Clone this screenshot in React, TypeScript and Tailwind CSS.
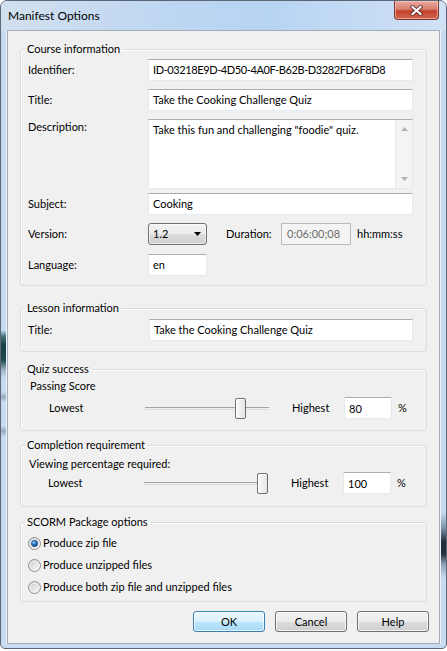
import React from "react";

function TextBox({
  value,
  className = "",
  disabled = false,
}: {
  value: string;
  className?: string;
  disabled?: boolean;
}) {
  return (
    <div
      className={`h-[22px] flex items-center border whitespace-nowrap ${
        disabled
          ? "bg-[#f4f4f4] border-[#b8bcc0] text-[#6d6d6d] pl-[5px]"
          : "bg-white border-[#e3e9ef] border-t-[#abadb3] text-black pl-[4px]"
      } ${className}`}
    >
      {value}
    </div>
  );
}

function Row({ label, children }: { label: string; children: React.ReactNode }) {
  return (
    <div className="flex items-center h-[22px]">
      <span className="w-[120px] shrink-0">{label}</span>
      {children}
    </div>
  );
}

function Group({
  title,
  className = "",
  children,
}: {
  title: string;
  className?: string;
  children: React.ReactNode;
}) {
  return (
    <fieldset
      className={`mx-[12px] min-w-0 border border-[#d5dfe5] rounded-[3px] px-[7px] shadow-[inset_1px_1px_0_#fff] ${className}`}
    >
      <legend className="-ml-[3px] px-[2px] leading-[16px]">{title}</legend>
      {children}
    </fieldset>
  );
}

function Slider({ value }: { value: number }) {
  // thumb travels over 113px of a 124px track
  const left = Math.round((value / 100) * 113);
  return (
    <div className="relative w-[124px] h-[22px] shrink-0">
      <div className="absolute left-0 right-0 top-[10px] h-[3px] border-t border-b border-t-[#a3a3a3] border-b-[#dcdcdc] bg-[#eef1f1]" />
      <div
        className="absolute top-[1px] w-[11px] h-[21px] rounded-[2px] border border-[#707070] bg-[linear-gradient(to_right,#fafafa,#e4e4e4)] shadow-[inset_1px_1px_0_#fff]"
        style={{ left }}
      />
    </div>
  );
}

function SliderRow({ value, shift = 0 }: { value: number; shift?: number }) {
  return (
    <div className={`flex items-center h-[22px] ${shift ? "-ml-[1px]" : ""}`}>
      <span className="ml-[21px] w-[96px] shrink-0">Lowest</span>
      <Slider value={value} />
      <span className="ml-[23px] w-[52px] shrink-0">Highest</span>
      <TextBox value={String(value)} className="w-[48px] items-start pt-[3px]" />
      <span className="ml-[6px]">%</span>
    </div>
  );
}

function Radio({ checked, label }: { checked?: boolean; label: string }) {
  return (
    <div className="flex items-center h-[22px]">
      <svg width="13" height="13" viewBox="0 0 13 13" className="shrink-0">
        <defs>
          <linearGradient id="rbFill" x1="0" y1="0" x2="1" y2="1">
            <stop offset="0" stopColor="#cdcdcd" />
            <stop offset="1" stopColor="#fafafa" />
          </linearGradient>
          <radialGradient id="rbDot" cx="0.4" cy="0.35" r="0.65">
            <stop offset="0" stopColor="#a8dcfa" />
            <stop offset="0.45" stopColor="#2d7cc6" />
            <stop offset="1" stopColor="#0d3a72" />
          </radialGradient>
        </defs>
        <circle cx="6.5" cy="6.5" r="6" fill="url(#rbFill)" stroke="#8e8f8f" />
        <circle cx="6.5" cy="6.5" r="4.5" fill="none" stroke="#f4f4f4" strokeWidth="0.8" />
        {checked && <circle cx="6.5" cy="6.5" r="3.2" fill="url(#rbDot)" stroke="#1b4f8a" strokeWidth="0.5" />}
      </svg>
      <span className="ml-[2px]">{label}</span>
    </div>
  );
}

function Button({ label, primary }: { label: string; primary?: boolean }) {
  return (
    <div
      className={`w-[72px] h-[21px] flex items-center justify-center rounded-[3px] border ${
        primary
          ? "border-[#3c7fb1] bg-[linear-gradient(#eaf6fd,#d9f0fc_50%,#bee6fd_51%,#a7d9f5)]"
          : "border-[#707070] bg-[linear-gradient(#f2f2f2,#ebebeb_50%,#dddddd_51%,#cfcfcf)]"
      } shadow-[inset_0_0_0_1px_rgba(255,255,255,0.7)]`}
    >
      {label}
    </div>
  );
}

export default function App() {
  return (
    <div className="w-[447px] h-[651px] bg-white [font-family:Lato,'Noto_Sans',sans-serif] text-[11px] leading-[16px] text-black">
      <div className="w-[447px] h-[649px] flex flex-col border border-[#5b6776] rounded-t-[7px] rounded-b-[5px] overflow-hidden bg-[#c8dcf1]">
        {/* Title bar */}
        <div className="h-[29px] flex items-start justify-between bg-[linear-gradient(90deg,#d2e0ef,#bcd6f2_40%,#b8d4f3_60%,#cfe1f5)]">
          <span className="self-center ml-[7px] text-[12px]">Manifest Options</span>
          <div className="mr-[7px] w-[45px] h-[19px] flex items-center justify-center rounded-b-[4px] border border-t-0 border-[#7e3a33] bg-[linear-gradient(#e9a99f,#d7806f_45%,#c4412e_55%,#d0674f)] shadow-[inset_0_0_0_1px_rgba(255,220,210,0.5)]">
            <svg width="13" height="11" viewBox="0 0 13 11">
              <path d="M2.5 2 L10.5 9 M10.5 2 L2.5 9" stroke="#5a2e2a" strokeWidth="4" strokeLinecap="square" opacity="0.8" />
              <path d="M2.5 2 L10.5 9 M10.5 2 L2.5 9" stroke="#ffffff" strokeWidth="2" strokeLinecap="square" />
            </svg>
          </div>
        </div>

        <div className="flex flex-1 min-h-0">
          <div className="w-[6px] shadow-[inset_-1px_0_0_#eaf3fc] bg-[linear-gradient(to_bottom,#c8dcf1_0px,#c8dcf1_300px,#4a7880_306px,#153f44_315px,#1d4a50_330px,#9fb5c5_340px,#c8dcf1_348px,#c8dcf1_362px,#98a8b8_367px,#c8dcf1_372px,#c8dcf1_396px,#98a8b8_401px,#c8dcf1_407px,#c8dcf1_100%)]" />

          {/* Client area */}
          <div className="w-[433px] border border-[#a2adb9] bg-[#f0f0f0] flex flex-col">
            <Group title="Course information" className="mt-[10px] pt-[2px] pb-[9px]">
              <div className="flex flex-col">
                <Row label="Identifier:">
                  <TextBox value="ID-03218E9D-4D50-4A0F-B62B-D3282FD6F8D8" className="w-[265px] tracking-[-0.4px]" />
                </Row>
                <div className="mt-[8px]">
                  <Row label="Title:">
                    <TextBox value="Take the Cooking Challenge Quiz" className="w-[265px]" />
                  </Row>
                </div>
                <div className="mt-[8px] flex items-start">
                  <span className="w-[120px] shrink-0">Description:</span>
                  <div className="w-[265px] h-[70px] flex bg-white border border-[#e3e9ef] border-t-[#abadb3]">
                    <div className="flex-1 pl-[4px] pt-[2px]">Take this fun and challenging "foodie" quiz.</div>
                    <div className="w-[17px] flex flex-col items-center justify-between py-[7px] bg-[#f4f4f4] border-l border-[#e6e6e6]">
                      <svg width="7" height="4" viewBox="0 0 7 4">
                        <path d="M0 4 L3.5 0 L7 4 Z" fill="#b4b4b4" />
                      </svg>
                      <svg width="7" height="4" viewBox="0 0 7 4">
                        <path d="M0 0 L7 0 L3.5 4 Z" fill="#b4b4b4" />
                      </svg>
                    </div>
                  </div>
                </div>
                <div className="mt-[4px]">
                  <Row label="Subject:">
                    <TextBox value="Cooking" className="w-[265px]" />
                  </Row>
                </div>
                <div className="mt-[8px]">
                  <Row label="Version:">
                    <div className="w-[59px] h-[22px] flex items-center justify-between pl-[4px] pr-[5px] rounded-[3px] border border-[#707070] bg-[linear-gradient(#f2f2f2,#ebebeb_50%,#dddddd_51%,#cfcfcf)] shadow-[inset_0_0_0_1px_rgba(255,255,255,0.6)]">
                      <span>1.2</span>
                      <svg width="7" height="4" viewBox="0 0 7 4">
                        <path d="M0 0 L7 0 L3.5 4 Z" fill="#000" />
                      </svg>
                    </div>
                    <span className="ml-[19px] w-[55px] shrink-0">Duration:</span>
                    <TextBox value="0:06:00;08" disabled className="w-[70px] items-start pt-[2px]" />
                    <span className="ml-[6px]">hh:mm:ss</span>
                  </Row>
                </div>
                <div className="mt-[9px]">
                  <Row label="Language:">
                    <TextBox value="en" className="w-[59px]" />
                  </Row>
                </div>
              </div>
            </Group>

            <Group title="Lesson information" className="mt-[14px] pt-[3px] pb-[10px]">
              <Row label="Title:">
                <TextBox value="Take the Cooking Challenge Quiz" className="w-[264px] ml-[1px]" />
              </Row>
            </Group>

            <Group title="Quiz success" className="mt-[9px] pt-[1px] pb-[11px]">
              <div className="pl-[2px]">Passing Score</div>
              <div className="mt-[3px]">
                <SliderRow value={80} />
              </div>
            </Group>

            <Group title="Completion requirement" className="mt-[6px] pt-[3px] pb-[12px]">
              <div className="pl-[1px]">Viewing percentage required:</div>
              <SliderRow value={100} shift={1} />
            </Group>

            <Group title="SCORM Package options" className="mt-[7px] pt-[2px] pb-[3px]">
              <Radio checked label="Produce zip file" />
              <Radio label="Produce unzipped files" />
              <Radio label="Produce both zip file and unzipped files" />
            </Group>

            <div className="mt-[9px] flex justify-end gap-[10px] pr-[10px]">
              <Button label="OK" primary />
              <Button label="Cancel" />
              <Button label="Help" />
            </div>
          </div>

          <div className="flex-1 shadow-[inset_1px_0_0_#eaf3fc] bg-[linear-gradient(to_bottom,#c8dcf1_0px,#c8dcf1_482px,#7d93a8_498px,#1f2a36_512px,#26313d_524px,#8aa0b6_534px,#c8dcf1_548px,#c8dcf1_100%)]" />
        </div>
        <div className="h-[4px]" />
      </div>
    </div>
  );
}
